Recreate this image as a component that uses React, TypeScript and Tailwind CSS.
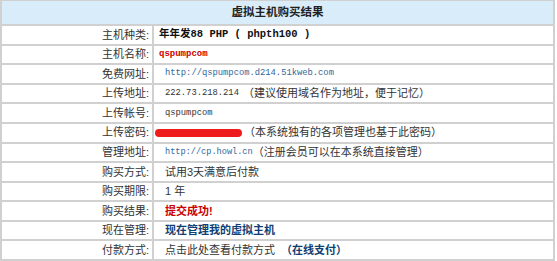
const cjk = "font-['Liberation_Sans','Noto_Sans_CJK_SC',sans-serif]";
const mono = "font-['Liberation_Mono','Noto_Sans_CJK_SC',monospace]";

const Row = ({ label, children, pad = "pl-[11px]" }: { label: string; children: React.ReactNode; pad?: string }) => (
  <>
    <div className="bg-white flex items-center justify-end pr-[3px] text-[11px] text-[#333]">{label}</div>
    <div className={`bg-white flex items-center ${pad} text-[11px] text-[#333] whitespace-nowrap`}>{children}</div>
  </>
);

export default function App() {
  return (
    <div className={`w-[557px] h-[261px] bg-white ${cjk}`}>
      <div className="w-[555px] h-[261px] bg-[#d0d0d0] px-[2px] pt-[1px] pb-[2px] grid grid-cols-[150px_1fr] grid-rows-[23px_repeat(12,1fr)] gap-[2px]">
        <div className="col-span-2 bg-[#d8ecf9] flex items-center justify-center text-[11.5px] font-bold text-[#222]">
          虚拟主机购买结果
        </div>
        <Row label="主机种类:" pad="pl-[5px]">
          <span className={`${mono} font-bold text-[10.5px] text-[#111]`}>年年发88 PHP ( phpth100 )</span>
        </Row>
        <Row label="主机名称:" pad="pl-[5px]">
          <span className={`${mono} font-bold text-[9px] text-[#cc0000]`}>qspumpcom</span>
        </Row>
        <Row label="免费网址:">
          <span className={`${mono} text-[8.8px] text-[#336699]`}>http://qspumpcom.d214.51kweb.com</span>
        </Row>
        <Row label="上传地址:">
          <span className={`${mono} text-[8.8px]`}>222.73.218.214</span>
          <span className="ml-[4px]">（建议使用域名作为地址，便于记忆）</span>
        </Row>
        <Row label="上传帐号:">
          <span className={`${mono} text-[8.8px]`}>qspumpcom</span>
        </Row>
        <Row label="上传密码:" pad="pl-[1px]">
          <span className="inline-block w-[87px] h-[8px] rounded-full bg-[#ee1c1c]" />
          <span className="ml-[2px]">（本系统独有的各项管理也基于此密码）</span>
        </Row>
        <Row label="管理地址:">
          <span className={`${mono} text-[8.6px] text-[#336699]`}>http://cp.howl.cn</span>
          <span>（注册会员可以在本系统直接管理）</span>
        </Row>
        <Row label="购买方式:">试用3天满意后付款</Row>
        <Row label="购买期限:">1 年</Row>
        <Row label="购买结果:">
          <span className="font-bold text-[#cc0000]">提交成功!</span>
        </Row>
        <Row label="现在管理:">
          <span className="font-bold text-[#0f3f73]">现在管理我的虚拟主机</span>
        </Row>
        <Row label="付款方式:">
          <span>点击此处查看付款方式</span>
          <span className="ml-[6px] font-bold text-[#0f3f73]">（在线支付）</span>
        </Row>
      </div>
    </div>
  );
}
